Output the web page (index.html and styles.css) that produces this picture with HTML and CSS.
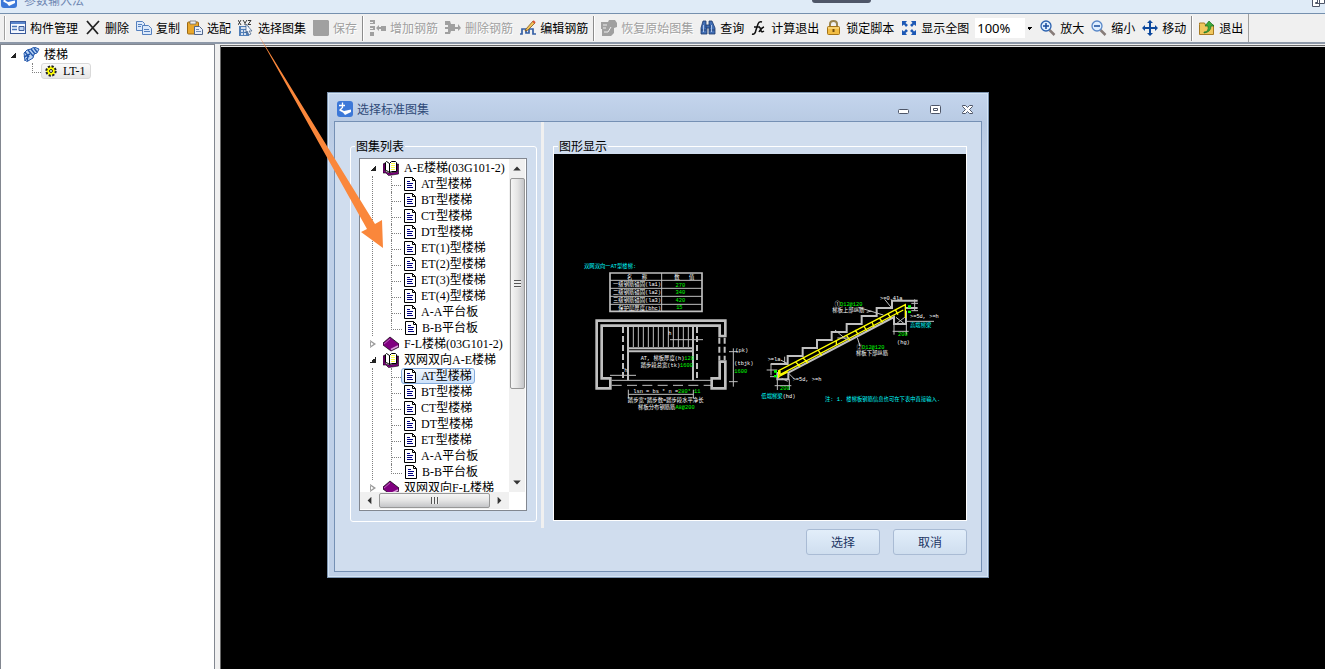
FILE: index.html
```html
<!DOCTYPE html>
<html lang="zh-CN">
<head>
<meta charset="utf-8">
<title>参数输入法</title>
<link rel="stylesheet" href="styles.css">
</head>
<body>
<svg class="defs" width="0" height="0" aria-hidden="true">
  <symbol id="app" viewBox="0 0 16 16"><rect width="16" height="16" rx="3" fill="#3c78d8"/><path d="M2 4.500h6M5.500 1.500v5l-3 3" stroke="#fff" stroke-width="1.300" fill="none"/><path d="M3 8l4 2 7-1.500V11l-6 3-2-2.500L3 10z" fill="#fff"/></symbol>
  <symbol id="doc" viewBox="0 0 14 16"><path d="M1.500 1.500h8l3 3v10h-11z" fill="#fff" stroke="#000"/><path d="M9.500 1.500v3h3" fill="none" stroke="#000"/><path d="M4 5.500h3M4 7.500h6M4 9.500h5M4 11.500h6" stroke="#000080"/></symbol>
  <symbol id="open" viewBox="0 0 16 16"><path d="M0 4l2-1v8l3 2 9-1V4l1.500 0V14l-10 1.500L3 13H0z" fill="#800080" stroke="#000" stroke-width=".6"/><path d="M2.500 2.500l1-1 3 2v9l-3-2h-1z" fill="#fff" stroke="#000"/><path d="M6.500 3.500l2-2h4l1 1v9h-5l-2 1z" fill="#fff" stroke="#000"/><path d="M9 3v8M11 3v8" stroke="#ff0" stroke-dasharray="1 1" stroke-width="1.500"/></symbol>
  <symbol id="closed" viewBox="0 0 16 16"><path d="M0 7l7-6 9 7v3l-8 4L0 9z" fill="#800080" stroke="#000" stroke-width=".7"/><path d="M8 13.500l7-3.500" stroke="#d9a0d9" stroke-width="1.500"/><path d="M1 8l6-5" stroke="#c070c0" stroke-width=".9"/></symbol>
</svg>

<header class="titlebar">
  <svg class="title-icon" width="16" height="16"><use href="#app"/></svg>
  <span class="title-text">参数输入法</span>
  <i class="pull-tab"></i>
  <svg class="restore" width="13" height="12" viewBox="0 0 13 12" fill="#fff" stroke="#4e5668"><path d="M5.500.5h7v7h-7zM.5 3.500h7v7h-7zM3.500 6.500h2v1h-2z"/></svg>
</header>

<nav class="toolbar" aria-label="工具栏">
  <div class="band">
  <i class="grip"></i>
  <button class="tool"><svg viewBox="0 0 16 16"><rect x=".5" y="1.500" width="15" height="12" fill="#f4f8ff" stroke="#3a5a9a"/><path d="M1 2h14v2H1z" fill="#5b86cc"/><path d="M2 6.500h5M2 9.500h5" stroke="#4a76b8" stroke-width="1.500"/><path d="M9 6.500h5v4H9z" fill="#bcd2f2" stroke="#3a5a9a"/></svg>构件管理</button>
  <button class="tool"><svg viewBox="0 0 16 16"><path d="M2 1l11 13M14 1L2 14" stroke="#222" stroke-width="1.800"/></svg>删除</button>
  <button class="tool"><svg viewBox="0 0 16 16" fill="#dce9fb" stroke="#5580be"><path d="M.5 1.500h6l2 2v7h-8z"/><path d="M6.500 5.500h6l3 3v6h-9z"/><path d="M2 4.500h4M2 6.500h3M8 9.500h5M8 11.500h6" /></svg>复制</button>
  <button class="tool"><svg viewBox="0 0 16 16"><rect x=".5" y="2" width="11" height="12" rx="1" fill="#e8a72c" stroke="#9c6914"/><path d="M3 1h6v3H3z" fill="#eee" stroke="#666" stroke-width=".7"/><path d="M7.500 6.500h5l3 3v5h-8z" fill="#e6eefb" stroke="#50658a"/><path d="M9 9.500h3M9 11.500h5" stroke="#708cb8"/></svg>选配</button>
  <button class="tool"><svg viewBox="0 0 16 16"><path d="M0 0l3 5M3 0L0 5M5 0l2 3 2-3M7 3v2M10 .5h3l-3 4h3" stroke="#222" fill="none" stroke-width=".9"/><rect x="1" y="6" width="10" height="10" fill="#527fb8"/><path d="M3 8h6M3 11h2M6 11h2M3 14h2M6 14h2" stroke="#fff" stroke-width="1.500"/><path d="M8 4l6 7h-3l2 3-2 1-2-4-1 2z" fill="#f5f8ff" stroke="#38577e" stroke-width=".7"/></svg>选择图集</button>
  <button class="tool" disabled><svg viewBox="0 0 16 16"><path d="M0 0h15l1 1v14l-1 1H1l-1-1z" fill="#a0a0a0"/></svg>保存</button>
  <i class="sep"></i>
  <button class="tool" disabled><svg viewBox="0 0 16 16" fill="#a0a0a0"><path d="M0 0h5v4H0v-1h3V2H0zM0 6h5v4H0V9h3V8H0zM0 12h4v4H0zM11 6h5v5h-5zM6 8l3-3v2h2v2H9v2z"/></svg>增加钢筋</button>
  <button class="tool" disabled><svg viewBox="0 0 16 16" fill="#a0a0a0"><path d="M0 1h5l1 3h4v7H6l-1 3H0v-2h3V9H0V7h3V5H0zM10 7h3V4l3 4-3 3V9h-3z"/></svg>删除钢筋</button>
  <button class="tool"><svg viewBox="0 0 16 16"><path d="M0 14h2V9h4v4h3V9h4v5h3" fill="none" stroke="#345fa5" stroke-width="1.700"/><path d="M6 9l7-8 2 2-7 7-3 1z" fill="#f1c45c" stroke="#80551c" stroke-width=".8"/><path d="M13 1l2 2" stroke="#d95333" stroke-width="2"/></svg>编辑钢筋</button>
  <i class="sep"></i>
  <button class="tool" disabled><svg viewBox="0 0 16 16"><path d="M0 2h7l1-2h6l2 3v4l-3 1v5l-3 3H1V9H0z" fill="#a0a0a0"/><path d="M2 5h4M2 8h3M3 12h4l3-5" stroke="#eee" fill="none"/></svg>恢复原始图集</button>
  <button class="tool"><svg viewBox="0 0 16 16" fill="#426eb4" stroke="#1c376b" stroke-width=".8"><path d="M3 1h3v4l1 2v7H1V8zM9 1h3l3 7v6H9V7z"/><path d="M6 5h4v3H6zM1 10h5M9 10h6"/><path d="M3.500 5v7M11.500 5v7" stroke="#c8dbf7"/></svg>查询</button>
  <button class="tool"><svg viewBox="0 0 16 16" fill="none" stroke="#111" stroke-width="1.500"><path d="M1 14q3 1 4-4l2-6q1-3 4-2M3 7h6M8 8q2-1 2 2t3 1M13 7q-3 1-5 5"/></svg>计算退出</button>
  <button class="tool"><svg viewBox="0 0 16 16"><path d="M4 8V4q0-3 3.500-3T11 4v4" fill="none" stroke="#9b8550" stroke-width="2"/><rect x="1.500" y="6.500" width="12" height="8" rx="1" fill="#f2bd43" stroke="#a57316"/><path d="M2 8h11" stroke="#ffe7a0"/><path d="M7.500 9v3" stroke="#76500f" stroke-width="2"/></svg>锁定脚本</button>
  <button class="tool"><svg viewBox="0 0 16 16" fill="#1c58b5"><path d="M1 1h5L4.500 3 7 5 5 7 3 4.500 1 6zM15 1h-5l1.500 2L9 5l2 2 2-2.500L15 6zM1 15h5l-1.500-2L7 11 5 9l-2 2.500L1 10zM15 15h-5l1.500-2L9 11l2-2 2 2.500 2-1.500z"/></svg>显示全图</button>
  <select class="zoom" aria-label="缩放比例"><option>100%</option></select>
  <button class="tool"><svg viewBox="0 0 16 16"><path d="M9.500 10l5 5" stroke="#877c79" stroke-width="2.500"/><circle cx="6" cy="6" r="5" fill="#e0efff" stroke="#2c62b0" stroke-width="1.300"/><path d="M3 6h6M6 3v6" stroke="#174b9d" stroke-width="1.500"/></svg>放大</button>
  <button class="tool"><svg viewBox="0 0 16 16"><path d="M9.500 10l5 5" stroke="#877c79" stroke-width="2.500"/><circle cx="6" cy="6" r="5" fill="#e0efff" stroke="#5a88c8" stroke-width="1.300"/><path d="M3 6h6" stroke="#174b9d" stroke-width="1.500"/></svg>缩小</button>
  <button class="tool"><svg viewBox="0 0 16 16" fill="#0d489d"><path d="M8 0l3 3H9v4h4V5l3 3-3 3V9H9v4h2l-3 3-3-3h2V9H3v2L0 8l3-3v2h4V3H5z"/></svg>移动</button>
  <i class="sep"></i>
  <button class="tool"><svg viewBox="0 0 16 16"><path d="M.5 4.500V3h5l1 2h8v9.500H.5z" fill="#f0c75d" stroke="#a77a22"/><path d="M5 12q5 0 4-6H6l4-5 5 5h-3q0 6-7 7z" fill="#3daa3c" stroke="#187022" stroke-width=".7"/></svg>退出</button>
  </div>
</nav>

<main class="workspace">
  <aside class="side">
    <div class="side-row"><i class="tri open"></i><svg class="stair-icon" width="17" height="16" viewBox="0 0 17 16"><path d="M1 6l3-3 4-1 3-2 5 2-2 4-3 1-1 4-5 3-1-3-2 3z" fill="#bcd5f5" stroke="#2458ac"/><path d="M2 5l4 5M5 3l5 6M8 2l4 5M11 1l3 4M1 10l6-3M4 15l1-7" stroke="#2458ac" stroke-width="1.400"/></svg>楼梯</div>
    <div class="side-row child"><span class="chip"><svg width="12" height="12" viewBox="0 0 12 12"><circle cx="6" cy="6" r="4.600" fill="#ff0" stroke="#222" stroke-width="2.200" stroke-dasharray="2.200 1.400"/><circle cx="6" cy="6" r="3.500" fill="#ff0"/><circle cx="6" cy="6" r="1.500" fill="#fff" stroke="#222"/></svg>LT-1</span></div>
  </aside>
  <div class="canvas"></div>
</main>

<section class="dialog" role="dialog" aria-labelledby="dlg-title">
  <header class="dialog-head">
    <svg width="16" height="16"><use href="#app"/></svg>
    <h1 id="dlg-title">选择标准图集</h1>
    <button class="win" aria-label="最小化"><svg width="12" height="12" viewBox="0 0 12 12"><rect x=".5" y="6.500" width="10" height="4" rx="1" fill="#fff" stroke="#4e5668"/></svg></button>
    <button class="win" aria-label="最大化"><svg width="12" height="12" viewBox="0 0 12 12"><rect x=".5" y="2.500" width="10" height="8" rx="1" fill="#fff" stroke="#4e5668"/><path d="M3.500 5.500h4v2h-4z" fill="#fff" stroke="#4e5668"/></svg></button>
    <button class="win" aria-label="关闭"><svg width="12" height="12" viewBox="0 0 12 12"><path d="M.5 2.500h3l2 2 2-2h3v1l-3 3 3 3v1h-3l-2-2-2 2h-3v-1l3-3-3-3z" fill="#fff" stroke="#4e5668"/></svg></button>
  </header>
  <div class="dialog-body">
    <div class="pane-list">
      <fieldset class="group list">
        <legend>图集列表</legend>
        <div class="treebox">
          <ul class="tree">
            <li><div class="row"><i class="tri open"></i><svg width="16" height="16"><use href="#open"/></svg>A-E楼梯(03G101-2)</div>
              <ul>
                <li><span><svg><use href="#doc"/></svg>AT型楼梯</span></li>
                <li><span><svg><use href="#doc"/></svg>BT型楼梯</span></li>
                <li><span><svg><use href="#doc"/></svg>CT型楼梯</span></li>
                <li><span><svg><use href="#doc"/></svg>DT型楼梯</span></li>
                <li><span><svg><use href="#doc"/></svg>ET(1)型楼梯</span></li>
                <li><span><svg><use href="#doc"/></svg>ET(2)型楼梯</span></li>
                <li><span><svg><use href="#doc"/></svg>ET(3)型楼梯</span></li>
                <li><span><svg><use href="#doc"/></svg>ET(4)型楼梯</span></li>
                <li><span><svg><use href="#doc"/></svg>A-A平台板</span></li>
                <li><span><svg><use href="#doc"/></svg>B-B平台板</span></li>
              </ul></li>
            <li><div class="row"><i class="tri"></i><svg width="16" height="16"><use href="#closed"/></svg>F-L楼梯(03G101-2)</div></li>
            <li><div class="row"><i class="tri open"></i><svg width="16" height="16"><use href="#open"/></svg>双网双向A-E楼梯</div>
              <ul>
                <li><span class="selected"><svg><use href="#doc"/></svg>AT型楼梯</span></li>
                <li><span><svg><use href="#doc"/></svg>BT型楼梯</span></li>
                <li><span><svg><use href="#doc"/></svg>CT型楼梯</span></li>
                <li><span><svg><use href="#doc"/></svg>DT型楼梯</span></li>
                <li><span><svg><use href="#doc"/></svg>ET型楼梯</span></li>
                <li><span><svg><use href="#doc"/></svg>A-A平台板</span></li>
                <li><span><svg><use href="#doc"/></svg>B-B平台板</span></li>
              </ul></li>
            <li><div class="row"><i class="tri"></i><svg width="16" height="16"><use href="#closed"/></svg>双网双向F-L楼梯</div></li>
          </ul>
          <div class="vbar"><i class="arrow up"></i><div class="thumb"><i class="lines"></i></div><i class="arrow down"></i></div>
          <div class="hbar"><i class="arrow left"></i><div class="thumb"><i class="lines"></i></div><i class="arrow right"></i></div>
        </div>
      </fieldset>
    </div>
    <i class="split"></i>
    <div class="pane-view">
      <fieldset class="group view">
        <legend>图形显示</legend>
        <svg class="drawing" viewBox="554 154 412 366" aria-label="AT型楼梯">
          <rect x="554" y="154" width="412" height="366" fill="#000"/>
          <svg x="575" y="255" width="190" height="165" viewBox="0 0 570 495" class="cad">
            <text x="27" y="38" class="cyan">双网双向一AT型楼梯:</text>
            <g class="line w5"><path d="M105 54h276v115H105z"/></g>
            <g class="line w3"><path d="M105 76h276M105 100h276M105 124h276M105 148h276M260 54v115"/></g>
            <text x="186" y="72" class="mid">名&#160;&#160;&#160;称</text><text x="328" y="72" class="mid">数&#160;&#160;&#160;值</text>
            <text x="258" y="94" class="end">一级钢筋锚固(la1)</text><text x="258" y="118" class="end">二级钢筋锚固(la2)</text><text x="258" y="142" class="end">三级钢筋锚固(la3)</text><text x="258" y="165" class="end">保护层厚度(bhc)</text>
            <text x="316" y="96" class="mid green">270</text><text x="316" y="118" class="mid green">340</text><text x="316" y="141" class="mid green">420</text><text x="313" y="163" class="mid green">15</text>
            <g class="line w8"><path d="M106 370v30H65V197h386v46h-17v-31H80v158z"/><path d="M434 320h17v80h-41v-30h24z"/></g>
            <g class="line w6"><path d="M159 212v164M354 212v164M159 280h195M159 289h195"/><path stroke-dasharray="18 9" d="M144 216v160M366 216v160M433 248v68M449 248v68"/></g>
            <g class="line w3"><path d="M175 214v62M190 214v62M205 214v62M220 214v62M235 214v62M250 214v62M265 214v62M280 214v62M295 214v62M310 214v62M325 214v62M340 214v62M110 376h300M160 418h195M160 404v26M355 404v26M285 254h99M105 361h78M475 280v115M462 290h28M462 380h26"/><path stroke-dasharray="30 16" d="M110 391h300"/></g>
            <text x="280" y="240">h</text><text x="148" y="351">h</text>
            <text x="197" y="315">AT, 梯板厚度(h)<tspan class="green">120</tspan></text><text x="197" y="335">踏步段总宽(tk)<tspan class="green">1600</tspan></text>
            <text x="175" y="413">lsn = bs * n =<tspan class="green">280* 11</tspan></text>
            <text x="272" y="441" class="mid">踏步宽*踏步数=踏步段水平净长</text><text x="274" y="462" class="mid">梯板分布钢筋筋<tspan class="green">A8@200</tspan></text>
            <text x="481" y="291">(pk)</text><text x="478" y="330">(tbjk)</text><text x="478" y="354" class="green">1600</text>
          </svg>
          <svg x="750" y="280" width="200" height="135" viewBox="0 0 600 405" class="cad">
            <g class="line w6"><path d="M62 252h51v-24h45v-24h43v-24h44v-24h45v-24h45v-24h45V84h46V62h77M82 276v22h33v-20L432 111v21h36V92M468 84h35"/></g>
            <g class="yellow"><path d="M86 294v-22L466 74v40M90 284L460 90M90 284v-12M137 246l14 14M160 235l14 14M205 211l10 15M259 196v-16M290 167l10 14M315 150l10 14M342 138l8 15M366 127l6 14M388 114l10 13M413 100l10 14M436 89l8 15M86 290l28-14"/></g>
            <g class="line w3"><path d="M325 82l75 23M350 97l14-4M404 58l21 26M427 84V64M494 58v34M484 70h20M484 92h20M468 124h84M438 112l26 20M464 112l-26 20M432 132v32M469 132v32M428 154h48M330 198l-8-25M255 150l35 30M262 174h34M92 240l20 10M104 230v20M63 252v34M50 270h32M60 290h22M82 298v32M118 298v32M74 317h50M118 282l14 14M95 295l18 9"/></g>
            <g class="green"><path d="M474 76h9v7h-9zM474 92h9v7h-9zM72 271h9v7h-9zM72 285h9v7h-9z"/></g>
            <text x="390" y="59">&gt;=0.4la</text><text x="254" y="77">①<tspan class="green">D12@120</tspan></text><text x="247" y="97">梯板上部纵筋</text>
            <text x="480" y="113">&gt;=5d, &gt;=h</text><text x="480" y="141" class="cyan">高端梯梁</text><text x="444" y="168" class="green">200</text><text x="441" y="191">(hg)</text>
            <text x="320" y="206">②<tspan class="green">D12@120</tspan></text><text x="318" y="226">梯板下部纵筋</text>
            <text x="53" y="244">&gt;=la</text><text x="128" y="303">&gt;=5d, &gt;=h</text><text x="90" y="330" class="green">200</text>
            <text x="34" y="354" class="cyan">低端梯梁<tspan class="white">(hd)</tspan></text><text x="225" y="363" class="cyan">注: 1. 楼梯板钢筋信息也可在下表中直接输入.</text>
          </svg>
        </svg>
      </fieldset>
      <div class="actions"><button>选择</button><button>取消</button></div>
    </div>
  </div>
</section>

<svg class="pointer" width="126" height="214" viewBox="0 0 126 214" aria-hidden="true"><path d="M0 0L117 190l7-4 1 28-22-16 6-3z" fill="#fa873b"/></svg>
</body>
</html>
```
FILE: styles.css
```css
* { box-sizing: border-box; }
body {
  margin: 0;
  height: 100vh;
  display: flex;
  flex-direction: column;
  overflow: hidden;
  position: relative;
  background: #f0f0f0;
  color: #000;
  font: 12px/16px "Noto Sans CJK SC", sans-serif;
}
button, select { font: inherit; color: inherit; }
button { border: 0; padding: 0; background: none; }
.defs { position: absolute; }

/* main window */
.titlebar {
  position: relative;
  flex: none;
  height: 14px;
  display: flex;
  align-items: flex-start;
  gap: 7px;
  padding-left: 1px;
  overflow: hidden;
  background: #dfebf7;
  border-bottom: 1px solid #7590ae;
}
.title-icon { margin-top: -8px; }
.title-text { margin-top: -8px; color: #6f87b2; }
.pull-tab {
  position: absolute;
  left: 812px;
  top: 0;
  width: 59px;
  height: 3px;
  border-radius: 0 0 3px 3px;
  background: #4e5668;
}
.restore { margin: -4px 0 0 auto; }

.toolbar {
  flex: none;
  height: 30px;
  background: #f0f0f0;
  border-bottom: 2px solid #8d98a8;
}
.band {
  width: max-content;
  height: 28px;
  display: flex;
  align-items: center;
  padding: 0 2px 0 4px;
  border-right: 1px solid #a0a0a0;
  white-space: nowrap;
}
.grip { width: 2px; height: 24px; border-left: 1px solid #a0a0a0; border-right: 1px solid #fff; }
.sep { width: 2px; height: 25px; margin: 0 2px; border-left: 1px solid #8c8c8c; border-right: 1px solid #fff; }
.tool { display: flex; align-items: center; gap: 4px; height: 24px; padding: 0 3px 0 4px; }
.tool svg { width: 16px; height: 16px; }
.tool:disabled { color: #a0a0a0; text-shadow: 1px 1px #fff; }
.zoom {
  width: 59px;
  height: 20px;
  margin: 0 2px 0 3px;
  padding: 0 0 0 2px;
  border: 0;
  border-radius: 0;
  appearance: none;
  font: 13px/20px "Noto Sans", sans-serif;
  background:
    linear-gradient(135deg, #000 50%, transparent 50%) right 1px top 9px / 3px 3px no-repeat,
    linear-gradient(225deg, #000 50%, transparent 50%) right 4px top 9px / 3px 3px no-repeat,
    linear-gradient(#f0f0f0, #f0f0f0) right / 9px 100% no-repeat #fff;
}

.workspace { flex: 1; min-height: 0; display: flex; gap: 5px; }
.side {
  width: 215px;
  padding-top: 2px;
  background: #fff;
  border: 1px solid #828790;
  border-width: 1px 1px 0;
  font-family: "Liberation Serif", "Noto Sans CJK SC", serif;
}
.side-row { display: flex; align-items: center; height: 16px; padding-left: 9px; }
.stair-icon { margin: 0 4px 0 6px; }
.side-row.child::before {
  content: "";
  align-self: flex-start;
  width: 8px;
  height: 9px;
  margin-left: 22px;
  border: dotted #808080;
  border-width: 0 0 1px 1px;
}
.chip {
  display: flex;
  align-items: center;
  gap: 6px;
  height: 16px;
  padding: 0 5px 0 3px;
  border: 1px solid #d9d9d9;
  border-radius: 3px;
  background: linear-gradient(#fafafa, #e6e6e6);
}
.canvas { flex: 1; margin-top: 1px; background: #000; border: 1px solid #696969; border-width: 1px 0 0 1px; box-shadow: inset 0 1px #e3e3e3; }

.tri { width: 6px; height: 6px; flex: none; margin-right: 1px; background: linear-gradient(135deg, transparent 50%, #222 50%); }
.tri:not(.open) { height: 8px; background: #999; clip-path: polygon(0 0, 100% 50%, 0 100%, 0 80%, 60% 50%, 0 20%, 0 80%, 15% 80%, 15% 20%, 0 20%); }

/* dialog window */
.dialog {
  position: absolute;
  left: 327px;
  top: 92px;
  width: 662px;
  display: flex;
  flex-direction: column;
  padding: 0 6px 5px;
  border: 1px solid #7d94b0;
  box-shadow: inset 0 0 0 1px #d5e5f5;
  background: linear-gradient(#c4d5ed, #b8cae3 30px, #bfd0e8 60px);
}
.dialog-head { display: flex; align-items: center; height: 28px; padding: 4px 8px 0 3px; }
.dialog-head h1 { flex: 1; margin: 0 0 0 4px; font-size: 12px; font-weight: 400; color: #2f4a78; }
.win { width: 12px; height: 12px; margin-left: 20px; }
.win svg { display: block; }
.dialog-body { display: flex; height: 451px; border: 1px solid #7590b4; background: #d0ddee; }
.group {
  min-width: 0;
  margin: 0;
  border: 1px solid #fff;
  border-radius: 3px;
}
.list { padding: 5px 9px 10px 8px; }
legend { padding: 0 1px; line-height: 14px; }
.list legend { margin-left: -4px; }
.pane-list { width: 206px; padding: 17px 4px 0 15px; }
.split { width: 3px; height: 406px; background: #f0f0f0; }
.pane-view { flex: 1; padding: 17px 14px 0 9px; }
.view { padding: 1px 0 0; border-radius: 0; }
.view legend { margin-left: 4px; }
.drawing { display: block; width: 100%; }

.treebox {
  display: grid;
  grid-template-columns: 1fr 16px;
  grid-template-rows: 333px 17px;
  padding: 0 1px 1px 0;
  border: 1px solid #828790;
  background: #fff;
}
.tree, .tree ul { list-style: none; margin: 0; padding: 0; }
.tree { overflow: hidden; padding-top: 1px; font-family: "Liberation Serif", "Noto Sans CJK SC", serif; white-space: nowrap; }
.row { display: flex; align-items: center; height: 16px; padding-left: 10px; }
.row svg { margin: 0 5px 0 6px; }
.tree ul { margin-left: 12px; padding-left: 18px; border-left: 1px dotted #808080; }
.tree ul li { display: flex; height: 16px; border-left: 1px dotted #808080; }
.tree ul li::before { content: ""; width: 9px; height: 9px; border-bottom: 1px dotted #808080; }
.tree ul li:last-child { border-left: 0; }
.tree ul li:last-child::before { width: 10px; border-left: 1px dotted #808080; }
.tree span { display: flex; align-items: center; gap: 4px; padding: 0 2px 0 1px; border: 1px solid transparent; border-radius: 3px; }
.tree span svg { width: 14px; height: 16px; }
.tree .selected { border-color: #84acdd; background: linear-gradient(#eff6fe, #cde2fb); }

.vbar, .hbar { display: flex; align-items: center; background: #f0f0f0; }
.vbar { flex-direction: column; }
.thumb { display: flex; align-items: center; justify-content: center; border: 1px solid #979797; border-radius: 2px; }
.vbar .thumb { width: 15px; height: 211px; background: linear-gradient(90deg, #f5f5f5, #e4e4e4 50%, #c4c5c8); }
.hbar .thumb { flex: 1; height: 15px; background: linear-gradient(#f5f5f5, #e4e4e4 50%, #c4c5c8); }
.vbar .lines { width: 7px; height: 8px; background: repeating-linear-gradient(#555 0 1px, #eee 1px 3px); }
.hbar .lines { width: 8px; height: 7px; background: repeating-linear-gradient(90deg, #555 0 1px, #eee 1px 3px); }
.arrow { width: 19px; height: 19px; background: linear-gradient(#333, #333) center / 8px 8px no-repeat; }
.up { clip-path: polygon(50% 40%, 70% 60%, 30% 60%); }
.down { margin-top: auto; clip-path: polygon(30% 40%, 70% 40%, 50% 60%); }
.left { clip-path: polygon(40% 50%, 60% 30%, 60% 70%); }
.right { clip-path: polygon(40% 30%, 60% 50%, 40% 70%); }

.actions { display: flex; justify-content: flex-end; gap: 13px; padding-top: 8px; }
.actions button {
  width: 74px;
  height: 26px;
  border: 1px solid #a9bbd4;
  border-radius: 3px;
  background: linear-gradient(#e2eefa, #cfdeef);
  color: #1c3564;
}

/* stair drawing */
.cad text { font: 16px "Liberation Mono", "Noto Sans CJK SC", monospace; fill: #fff; }
.cad .mid { text-anchor: middle; }
.cad .end { text-anchor: end; }
.cad .cyan { fill: #0ff; }
.cad .green { fill: #0f0; }
.cad .white { fill: #fff; }
.line { fill: none; stroke: #c0c0c0; }
.w3 { stroke-width: 3px; }
.w5 { stroke-width: 5px; }
.w6 { stroke-width: 6px; }
.w8 { stroke-width: 8px; }
.yellow { fill: none; stroke: #ff0; stroke-width: 4px; }

.pointer { position: absolute; left: 258px; top: 34px; pointer-events: none; }
```
